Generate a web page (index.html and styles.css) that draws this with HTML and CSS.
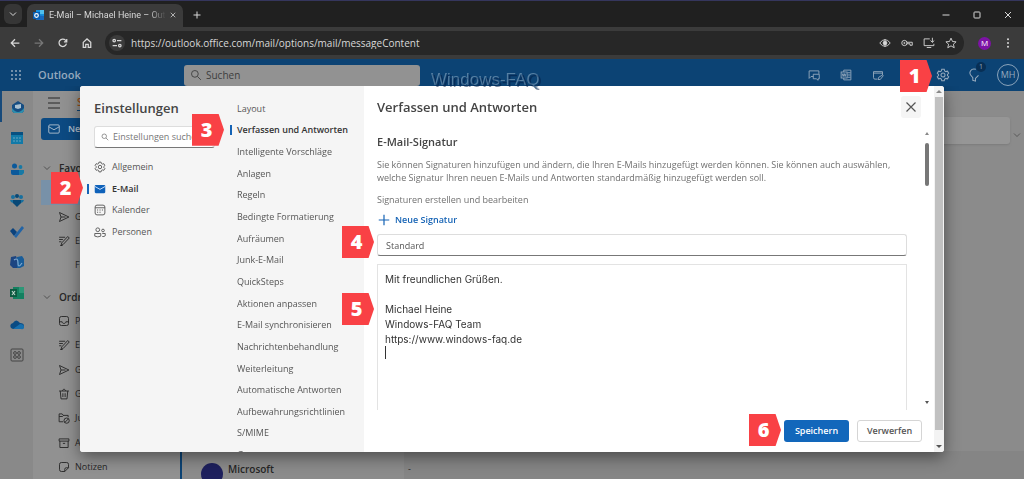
FILE: index.html
```html
<!DOCTYPE html>
<html lang="de">
<head>
<meta charset="utf-8">
<title>E-Mail – Michael Heine – Outlook</title>
<link rel="stylesheet" href="styles.css">
</head>
<body>
<svg class="sprite" aria-hidden="true">
  <symbol id="gear" viewBox="0 0 16 16"><path d="M6.6 1.5h2.8l.5 1.9 1.3.7 1.9-.5 1.4 2.4L13.100 7.400v1.200l1.400 1.400-1.400 2.400-1.900-.5-1.300.7-.5 1.900H6.600l-.5-1.900-1.300-.7-1.900.5-1.400-2.400 1.400-1.400V7.400L1.500 6l1.400-2.400 1.900.5 1.300-.7z"/><circle cx="8" cy="8" r="2.300"/></symbol>
  <symbol id="search" viewBox="0 0 16 16"><circle cx="6.500" cy="6.500" r="4.500"/><path d="M10 10l4.500 4.500"/></symbol>
  <symbol id="send" viewBox="0 0 16 16"><path d="M2 2l12.500 6L2 14l2-6zM4 8h6"/></symbol>
  <symbol id="draft" viewBox="0 0 16 16"><path d="M1.500 3h8M1.500 6h5M1.500 9h3M4 14l1-3.500 8-8.500 2 2-8 8.500zM3 14h3"/></symbol>
  <symbol id="inbox" viewBox="0 0 16 16"><rect x="2" y="2" width="12" height="12" rx="2.500"/><path d="M2 9h3.500c0 3 5 3 5 0H14"/></symbol>
  <symbol id="trash" viewBox="0 0 16 16"><path d="M1.500 4h13M6 4c0-3 4-3 4 0M3 4l1 10.500h8L13 4M6.500 7v5M9.500 7v5"/></symbol>
  <symbol id="junk" viewBox="0 0 16 16"><path d="M7 13H1.500V2.500h4L7 4.500h6.500V7M1.500 6H6l1.500-1.500"/><circle cx="11.500" cy="11.500" r="3.500"/><path d="M9 14l5-5"/></symbol>
  <symbol id="archive" viewBox="0 0 16 16"><path d="M1.500 2.500h13v3h-13zM2.500 5.500v8.500h11V5.500M6.500 8.500h3"/></symbol>
  <symbol id="note" viewBox="0 0 16 16"><path d="M9 14H4.500Q2 14 2 11.500v-7Q2 2 4.500 2h7Q14 2 14 4.500V9l-5 5v-3q0-2 2-2h3"/></symbol>
  <symbol id="people" viewBox="0 0 16 16"><circle cx="5" cy="5" r="2.500"/><circle cx="12" cy="6" r="1.800"/><path d="M1 13.500V10h8v3.500q-4 2-8 0M11 10h4v3q-1.500 1.500-4 1"/></symbol>
  <symbol id="calendar" viewBox="0 0 16 16"><rect x="1.500" y="1.500" width="13" height="13" rx="2.500"/><path d="M1.500 5h13M4 8h1.500M7.300 8h1.500M10.500 8H12M4 11h1.500M7.300 11h1.500"/></symbol>
  <symbol id="envelope" viewBox="0 0 16 16"><rect x="1" y="2.500" width="14" height="11" rx="1.500"/><path d="M1 5l7 4 7-4"/></symbol>
  <symbol id="chevron" viewBox="0 0 16 16"><path d="M2 5l6 6 6-6"/></symbol>
  <symbol id="cross" viewBox="0 0 16 16"><path d="M2 2l12 12M14 2L2 14"/></symbol>
  <symbol id="plus" viewBox="0 0 16 16"><path d="M8 1v14M1 8h14"/></symbol>
</svg>

<div class="browser">
  <header class="tabstrip">
    <button class="tab-search" aria-label="Tabs durchsuchen"><svg class="i8"><use href="#chevron"/></svg></button>
    <div class="tab">
      <svg class="favicon" viewBox="0 0 12 12"><path fill="#1490df" d="M3 1h8v6H3z"/><path fill="#50c0ee" d="M7 1h4v4H7z"/><path fill="#1768bd" d="M2 6l9 1v4H3z"/><rect x="0" y="3" width="7" height="7" fill="#075cae"/><circle cx="3.500" cy="6.500" r="1.800" stroke="#fff" stroke-width="1.200" fill="none"/></svg>
      <span class="tab-title">E-Mail – Michael Heine – Outlook</span>
      <button class="plain" aria-label="Tab schließen"><svg class="i6"><use href="#cross"/></svg></button>
    </div>
    <button class="plain newtab" aria-label="Neuer Tab"><svg class="i8"><use href="#plus"/></svg></button>
    <div class="window-controls">
      <button class="plain" aria-label="Minimieren"><svg class="i8" viewBox="0 0 16 16"><path d="M1 8h14"/></svg></button>
      <button class="plain" aria-label="Maximieren"><svg class="i8" viewBox="0 0 16 16"><rect x="2" y="2" width="12" height="12" rx="1.500"/></svg></button>
      <button class="plain" aria-label="Schließen"><svg class="i8"><use href="#cross"/></svg></button>
    </div>
  </header>

  <div class="toolbar">
    <nav class="nav-buttons" aria-label="Navigation">
      <button class="plain" aria-label="Zurück"><svg class="i10" viewBox="0 0 16 16"><path d="M15 8H2M8 2L2 8l6 6"/></svg></button>
      <button class="plain dim" aria-label="Vorwärts"><svg class="i10" viewBox="0 0 16 16"><path d="M1 8h13M8 2l6 6-6 6"/></svg></button>
      <button class="plain" aria-label="Neu laden"><svg class="i10" viewBox="0 0 16 16"><path d="M13.500 9A6 6 0 1 1 12 3.500L14 6M14 1.500V6H9.500"/></svg></button>
      <button class="plain" aria-label="Startseite"><svg class="i10" viewBox="0 0 16 16"><path d="M2 7l6-5.500L14 7v8h-4v-5H6v5H2z"/></svg></button>
    </nav>
    <div class="address">
      <button class="plain site-info" aria-label="Websiteinformationen"><svg class="i10" viewBox="0 0 16 16"><circle cx="3.500" cy="4" r="2"/><path d="M8 4h7M1 12h7"/><circle cx="12.500" cy="12" r="2"/></svg></button>
      <input class="url" aria-label="Adresse" value="https://outlook.office.com/mail/options/mail/messageContent">
      <button class="plain" aria-label="Ansicht"><svg class="i12" viewBox="0 0 16 16"><path d="M1 8q7-9 14 0-7 9-14 0z"/><circle cx="8" cy="8" r="2.500" fill="currentColor"/><path d="M8 3v10"/></svg></button>
      <button class="plain" aria-label="Passwörter"><svg class="i12" viewBox="0 0 16 16"><circle cx="4.500" cy="8" r="3.500"/><circle cx="4.500" cy="8" r=".8"/><path d="M8 7h7v4h-3V9H8"/></svg></button>
      <button class="plain" aria-label="App installieren"><svg class="i12" viewBox="0 0 16 16"><path d="M9 2.500H1.500v9h13V9M5 14h6M12.500 1v6M10 4.800L12.500 7 15 4.800"/></svg></button>
      <button class="plain" aria-label="Lesezeichen"><svg class="i12" viewBox="0 0 16 16"><path d="M8 1.500l2 4.500 4.800.4-3.600 3.200 1.100 4.700L8 11.800l-4.300 2.500 1.100-4.700L1.200 6.400 6 6z"/></svg></button>
    </div>
    <button class="profile" aria-label="Profil">M</button>
    <button class="plain" aria-label="Menü"><svg class="i10" viewBox="0 0 16 16"><g fill="currentColor" stroke="none"><circle cx="8" cy="2" r="1.600"/><circle cx="8" cy="8" r="1.600"/><circle cx="8" cy="14" r="1.600"/></g></svg></button>
  </div>
</div>

<div class="suitebar">
  <button class="plain waffle" aria-label="Apps"><svg class="i12" viewBox="0 0 12 12"><g fill="currentColor" stroke="none"><circle cx="2" cy="2" r="1"/><circle cx="6" cy="2" r="1"/><circle cx="10" cy="2" r="1"/><circle cx="2" cy="6" r="1"/><circle cx="6" cy="6" r="1"/><circle cx="10" cy="6" r="1"/><circle cx="2" cy="10" r="1"/><circle cx="6" cy="10" r="1"/><circle cx="10" cy="10" r="1"/></g></svg></button>
  <span class="brand">Outlook</span>
  <label class="suite-search"><svg class="i12"><use href="#search"/></svg><input aria-label="Suchen" placeholder="Suchen"></label>
  <div class="suite-actions">
    <button class="plain" aria-label="Chat"><svg class="i12" viewBox="0 0 16 16"><path d="M7 10H4l-2.500 2.500V2.500h13v4M7 7h8v6h-1.500v2l-2.500-2H7z"/></svg></button>
    <button class="plain" aria-label="Word"><svg class="i12" viewBox="0 0 16 16"><path d="M5 4V1.500h9.500v13H5V12M10 5h4M10 8h4M10 11h4"/><rect x="1.500" y="4" width="8" height="8"/><path d="M3 6l1.200 4L5.500 6l1.300 4L8 6"/></svg></button>
    <button class="plain" aria-label="Notizen"><svg class="i12" viewBox="0 0 16 16"><path d="M7 13.500H4Q2 13.500 2 11.500v-8h12V8M2 5.500h12M8 14l1-3 5-3 1 1-4 5z"/></svg></button>
    <span class="spacer"></span>
    <button class="plain settings" aria-label="Einstellungen"><svg class="i14"><use href="#gear"/></svg><span class="step step-1">1</span></button>
    <button class="plain tips" aria-label="Tipps"><svg class="i14" viewBox="0 0 16 16"><path d="M9 1.500C3 0 1 5 3 8l2.500 3v3l3 1v-3L12 8.500"/></svg><span class="count">1</span></button>
    <button class="account" aria-label="Konto">MH</button>
  </div>
</div>

<main class="mail">
  <nav class="rail" aria-label="Apps">
    <a href="#" class="current" aria-label="E-Mail"><svg viewBox="0 0 14 14"><path fill="#164d82" d="M1 5l6-4 6 4v6l-2 2H3l-2-2z"/><path fill="#2d8eae" d="M1 8q6 8 12 0v3l-2 2H3l-2-2z"/><path fill="#aac0d0" d="M4 5l6-1v4L7 9 4 8z"/></svg></a>
    <a href="#" aria-label="Kalender"><svg viewBox="0 0 14 14"><path fill="#075081" d="M1 1h12v4H1z"/><path fill="#127aa8" d="M1 4h12v9H1z"/><path stroke="#69a4c0" stroke-width="1.200" stroke-dasharray="2 1" d="M3 7h8M3 10h8"/></svg></a>
    <a href="#" aria-label="Personen"><svg viewBox="0 0 14 14"><g fill="#0b599b"><circle cx="4.500" cy="4" r="2.500"/><path d="M1 8h8v5H3q-2 0-2-2z"/></g><g fill="#1779a5"><circle cx="10.500" cy="5" r="1.900"/><path d="M9 8h5v3l-2 2H9z"/></g></svg></a>
    <a href="#" aria-label="Gruppen"><svg viewBox="0 0 14 14"><g fill="#17709f"><circle cx="3" cy="4" r="2"/><circle cx="11" cy="4" r="2"/><path d="M0 7h5v4L1 9zM9 7h5l-1 2-4 2z"/></g><g fill="#084876"><circle cx="7" cy="3" r="2"/><path d="M3 7h8v3l-4 4-4-4z"/></g></svg></a>
    <a href="#" aria-label="To Do"><svg viewBox="0 0 14 14"><path fill="#0b427d" d="M0 7l3-3 4 4-3 4z"/><path fill="#2264a6" d="M4 12l8-10 2 2-8 10z"/></svg></a>
    <a href="#" aria-label="Word"><svg viewBox="0 0 14 14"><path fill="#1d4581" d="M1 2l5-1 2 5v7H3L0 10z"/><path fill="#195d99" d="M7 2l5-1 2 3v7l-4 2H7z"/><path stroke="#80a9d0" fill="none" d="M4 5q4-3 4 3t4 0"/></svg></a>
    <a href="#" aria-label="Excel"><svg viewBox="0 0 14 14"><path fill="#138060" d="M3 1h11v12H3z"/><path fill="#2d9777" d="M9 1h5v6H9z"/><path fill="#0d5940" d="M0 3h7v8H0z"/><path stroke="#b8d3c8" fill="none" d="M2 5l3 4M5 5L2 9"/></svg></a>
    <a href="#" aria-label="OneDrive"><svg viewBox="0 0 14 14"><path fill="#0a4b83" d="M1 11q-2-4 2-5 3-5 7 0 4 0 4 3t-3 3H3z"/><path fill="#166fae" d="M3 12l7-5q4 0 4 3t-3 2z"/></svg></a>
    <a href="#" aria-label="Weitere Apps"><svg class="outlined" viewBox="0 0 14 14"><rect x="1" y="1" width="12" height="12" rx="1"/><circle cx="5" cy="5" r="1.400"/><circle cx="9" cy="5" r="1.400"/><circle cx="5" cy="9" r="1.400"/><circle cx="9" cy="9" r="1.400"/></svg></a>
  </nav>

  <section class="folders">
    <div class="ribbon-tabs"><svg class="i12" viewBox="0 0 12 12"><path d="M0 1h12M0 6h12M0 11h12"/></svg><span class="ribbon-tab">Start</span></div>
    <button class="compose"><svg class="i12"><use href="#envelope"/></svg>Neue E-Mail</button>
    <ul class="folder-list">
      <li class="group"><svg class="i8"><use href="#chevron"/></svg>Favoriten</li>
      <li class="selected"></li>
      <li><svg class="i12"><use href="#send"/></svg>Gesendete</li>
      <li><svg class="i12"><use href="#draft"/></svg>Entwürfe</li>
      <li class="add">Favorit</li>
      <li class="group second"><svg class="i8"><use href="#chevron"/></svg>Ordner</li>
      <li><svg class="i12"><use href="#inbox"/></svg>Posteingang</li>
      <li><svg class="i12"><use href="#draft"/></svg>Entwürfe</li>
      <li><svg class="i12"><use href="#send"/></svg>Gesendete</li>
      <li><svg class="i12"><use href="#trash"/></svg>Gelöschte</li>
      <li><svg class="i12"><use href="#junk"/></svg>Junk-E-Mail</li>
      <li><svg class="i12"><use href="#archive"/></svg>Archiv</li>
      <li><svg class="i12"><use href="#note"/></svg>Notizen</li>
    </ul>
  </section>

  <section class="messages">
    <div class="ribbon"><div class="ribbon-box"></div><svg class="i8"><use href="#chevron"/></svg></div>
    <div class="message-row">
      <div class="message"><span class="avatar"></span><strong>Microsoft</strong></div>
      <div class="reading"><span>-</span></div>
    </div>
  </section>
</main>

<div class="dialog" role="dialog" aria-label="Einstellungen">
  <aside class="categories">
    <h2>Einstellungen</h2>
    <label class="settings-search"><svg class="i8"><use href="#search"/></svg><input aria-label="Einstellungen suchen" placeholder="Einstellungen suchen"></label>
    <nav class="category-list" aria-label="Kategorien">
      <a href="#"><svg class="i12"><use href="#gear"/></svg>Allgemein</a>
      <a href="#" class="active"><svg class="i12" viewBox="0 0 16 16"><rect x="1" y="2.500" width="14" height="11" rx="1.500" fill="#0f62ba" stroke="none"/><path d="M1 4.500l7 4 7-4" stroke="#dceaff"/></svg>E-Mail<span class="step step-2">2</span></a>
      <a href="#"><svg class="i12"><use href="#calendar"/></svg>Kalender</a>
      <a href="#"><svg class="i12"><use href="#people"/></svg>Personen</a>
    </nav>
  </aside>
  <nav class="sections" aria-label="E-Mail-Einstellungen">
    <a href="#">Layout</a>
    <a href="#" class="active">Verfassen und Antworten<span class="step step-3">3</span></a>
    <a href="#">Intelligente Vorschläge</a>
    <a href="#">Anlagen</a>
    <a href="#">Regeln</a>
    <a href="#">Bedingte Formatierung</a>
    <a href="#">Aufräumen</a>
    <a href="#">Junk-E-Mail</a>
    <a href="#">QuickSteps</a>
    <a href="#">Aktionen anpassen</a>
    <a href="#">E-Mail synchronisieren</a>
    <a href="#">Nachrichtenbehandlung</a>
    <a href="#">Weiterleitung</a>
    <a href="#">Automatische Antworten</a>
    <a href="#">Aufbewahrungsrichtlinien</a>
    <a href="#">S/MIME</a>
    <a href="#">Gruppen</a>
  </nav>
  <section class="panel">
    <header class="panel-head"><h2>Verfassen und Antworten</h2><button class="close" aria-label="Schließen"><svg class="i12"><use href="#cross"/></svg></button></header>
    <div class="panel-scroll">
      <div class="panel-body">
        <h3>E-Mail-Signatur</h3>
        <p>Sie können Signaturen hinzufügen und ändern, die Ihren E-Mails hinzugefügt werden können. Sie können auch auswählen,<br>welche Signatur Ihren neuen E-Mails und Antworten standardmäßig hinzugefügt werden soll.</p>
        <p class="caption">Signaturen erstellen und bearbeiten</p>
        <button class="new-signature"><svg class="i12"><use href="#plus"/></svg>Neue Signatur</button>
        <div class="field"><input aria-label="Signaturname" value="Standard"><span class="step step-field">4</span></div>
        <div class="editor"><textarea aria-label="Signatur">Mit freundlichen Grüßen.

Michael Heine
Windows-FAQ Team
https://www.windows-faq.de
</textarea><span class="caret"></span><span class="step step-editor">5</span></div>
      </div>
      <div class="thin-scroll"><span class="arrow up"></span><span class="thin-thumb"></span><span class="arrow down"></span></div>
    </div>
    <footer class="panel-foot">
      <button class="primary">Speichern<span class="step step-6">6</span></button>
      <button class="secondary">Verwerfen</button>
    </footer>
  </section>
  <div class="wide-scroll"><span class="arrow up"></span><span class="wide-thumb"></span><span class="arrow down"></span></div>
</div>
<div class="watermark">Windows-FAQ</div>
</body>
</html>
```

FILE: styles.css
```css
* { box-sizing: border-box; }
body {
  margin: 0;
  height: 100vh;
  display: flex;
  flex-direction: column;
  overflow: hidden;
  background: #8f8f8f;
  color: #555;
  font: 9px/12px "Open Sans", "Noto Sans", sans-serif;
}
button, input, textarea { font: inherit; color: inherit; }
button { padding: 0; border: 0; }
input, textarea { min-width: 0; padding: 0; border: 0; background: none; outline: 0; }
a { color: inherit; text-decoration: none; }
h2, h3, p, ul { margin: 0; padding: 0; }
svg { flex: none; fill: none; stroke: currentColor; stroke-width: 1.2; }
.sprite { display: none; }
.i6 { width: 6px; height: 6px; stroke-width: 2; }
.i8 { width: 8px; height: 8px; stroke-width: 2; }
.i10 { width: 10px; height: 10px; stroke-width: 2; }
.i12 { width: 12px; height: 12px; }
.i14 { width: 14px; height: 14px; }
.plain { display: flex; align-items: center; justify-content: center; background: none; }

/* Browser frame */
.browser { background: #3b3b3b; color: #d8d8d8; border-top: 1px solid #35365d; }
.tabstrip { display: flex; align-items: flex-end; height: 26px; padding-left: 4px; background: #202020; }
.tab-search { display: flex; align-items: center; justify-content: center; width: 18px; height: 20px; margin-bottom: 3px; border-radius: 6px; background: #363636; }
.tab { display: flex; align-items: center; gap: 4px; width: 156px; height: 23px; margin-left: 5px; padding: 0 7px 2px 6px; border-radius: 7px 7px 0 0; background: #3b3b3b; }
.favicon { width: 12px; height: 12px; stroke: none; }
.tab-title { flex: 1; overflow: hidden; font-family: Roboto, "Open Sans", sans-serif; white-space: nowrap; mask-image: linear-gradient(90deg, #000 85%, transparent); }
.newtab { height: 25px; margin-left: 10px; }
.window-controls { display: flex; gap: 23px; height: 25px; margin-left: auto; padding-right: 12px; }
.toolbar { display: flex; align-items: center; height: 32px; padding: 0 11px 0 10px; }
.nav-buttons { display: flex; gap: 14px; }
.dim { color: #777; }
.address { flex: 1; display: flex; align-items: center; gap: 10px; height: 24px; margin: 0 14px 0 13px; padding: 0 7px 0 4px; border-radius: 12px; background: #272727; }
.site-info { width: 16px; height: 16px; border-radius: 8px; background: #3b3b3b; }
.url { flex: 1; margin-left: -4px; font: 10px/12px "Noto Sans", "Open Sans", sans-serif; font-family: Lato, "Open Sans", sans-serif; }
.address .url { font-family: "Open Sans", sans-serif; }
.profile { width: 13px; height: 13px; margin-right: 12px; border-radius: 50%; background: #7d13a5; color: #fff; font-size: 8px; line-height: 12px; }

/* Suite header */
.suitebar { position: relative; z-index: 4; display: flex; align-items: center; flex: none; height: 27px; margin-bottom: 5px; padding: 5px 5px 0 10px; background: #0c4374; color: #95a9bd; }
.brand { flex: none; width: 146px; margin-left: 16px; font-size: 11px; font-weight: 600; }
.suite-search { display: flex; align-items: center; gap: 4px; width: 23%; min-width: 236px; height: 21px; padding-left: 6px; border-radius: 3px; background: #929292; color: #3e3e3e; font-size: 10px; }
.suite-search input { flex: 1; }
.suite-search input::placeholder { color: #3e3e3e; opacity: 1; }
.suite-actions { display: flex; align-items: center; gap: 20px; margin-left: auto; }
.spacer { width: 12px; }
.settings, .tips { position: relative; }
.tips { margin-left: -2px; }
.account { width: 22px; height: 22px; margin-left: -5px; border: 1px solid #8aa3ba; border-radius: 50%; background: none; font-size: 9px; line-height: 20px; }
.count { position: absolute; top: -6px; right: -4px; width: 10px; height: 10px; border-radius: 5px; background: #082f55; font-size: 7px; line-height: 10px; }

/* Mail page behind the dialog */
.mail { flex: 1; display: flex; min-height: 0; color: #262626; box-shadow: 0 -5px #0c4374; }
.rail { display: flex; flex-direction: column; width: 33px; background: #898989; }
.rail a { display: flex; align-items: center; justify-content: center; height: 31px; }
.rail a.current { border-left: 2px solid #174a7b; }
.rail svg { width: 14px; height: 14px; stroke: none; }
.rail .outlined { stroke: #444; stroke-width: 1; }
.folders { display: flex; flex-direction: column; width: 147px; padding-left: 8px; background: #919191; }
.ribbon-tabs { display: flex; align-items: center; gap: 17px; height: 27px; padding: 0 0 3px 7px; }
.ribbon-tabs svg { stroke-width: 1; }
.ribbon-tab { padding-bottom: 2px; border-bottom: 1px solid #0c4374; color: #9a4a12; font-size: 10px; font-weight: 600; }
.compose { display: flex; align-items: center; gap: 8px; flex: none; height: 22px; margin-bottom: 16px; padding-left: 7px; border-radius: 3px; background: #0c4a82; color: #b0bfce; font-weight: 600; white-space: nowrap; }
.folder-list { flex: 1; display: flex; flex-direction: column; list-style: none; }
.folder-list li { flex: 1; display: flex; align-items: center; gap: 5px; padding-left: 17px; white-space: nowrap; }
.folder-list .group { gap: 8px; padding-left: 2px; font-size: 10px; font-weight: 600; }
.folder-list .group svg { stroke-width: 1.2; }
.folder-list .selected { background: #7891a8; }
.folder-list .add { padding-left: 34px; }
.folder-list .second { margin-top: 7px; }
.messages { flex: 1; display: flex; flex-direction: column; justify-content: space-between; background: #8b8b8b; }
.ribbon { display: flex; align-items: center; gap: 3px; height: 54px; padding: 26px 3px 2px 8px; }
.ribbon-box { flex: 1; height: 27px; border-radius: 3px; background: #969696; box-shadow: 0 1px 2px #7c7c7c; }
.ribbon svg { align-self: flex-end; margin-bottom: 4px; stroke-width: 1; }
.message-row { display: flex; height: 28px; border-left: 2px solid #0c4374; background: #858585; }
.message { display: flex; gap: 5px; width: 222px; padding: 12px 0 0 19px; background: #8b8b8b; }
.avatar { flex: none; width: 22px; height: 22px; border-radius: 50%; background: #1e205d; }
.message strong { font-size: 10px; font-weight: 600; }
.reading { padding: 12px 0 0 4px; }

/* Settings dialog */
.dialog { position: fixed; z-index: 3; inset: 86px 80px 27px 80px; display: flex; border-radius: 3px; background: #fff; box-shadow: 0 5px 16px rgba(0, 0, 0, .45); }
.dialog h2 { color: #444; font-size: 13px; line-height: 20px; font-weight: 600; }
.categories { width: 145px; padding: 12px 10px 0 14px; border-radius: 3px 0 0 3px; background: #f5f5f5; }
.settings-search { display: flex; align-items: center; gap: 4px; height: 22px; margin: 8px 0 8px; padding-left: 6px; border: 1px solid #ddd; border-bottom-color: #777; border-radius: 3px; background: #fff; }
.settings-search svg { stroke-width: 1.2; }
.settings-search input { flex: 1; }
.settings-search input::placeholder { color: #777; opacity: 1; }
.category-list { display: flex; flex-direction: column; height: 87px; }
.category-list a { position: relative; flex: 1; display: flex; align-items: center; gap: 6px; }
.active { color: #333; font-weight: 600; }
.active::before { content: ""; position: absolute; left: -7px; top: 50%; width: 2px; height: 10px; margin-top: -5px; background: #1563b5; }
.sections { display: flex; flex-direction: column; width: 139px; padding: 12px 0 0 12px; background: #f5f5f5; clip-path: inset(0 0 0 -50px); }
.sections a { position: relative; flex: 1; display: flex; align-items: center; }
.sections::after { content: ""; margin-bottom: -14px; }
.panel { flex: 1; display: flex; flex-direction: column; min-width: 0; }
.panel-head { display: flex; align-items: center; justify-content: space-between; height: 42px; padding: 0 13px; }
.close { display: flex; align-items: center; justify-content: center; width: 20px; height: 22px; border-radius: 3px; background: #f5f5f5; }
.close svg { stroke-width: 1.6; }
.panel-scroll { flex: 1; display: flex; min-height: 0; }
.panel-body { flex: 1; display: flex; flex-direction: column; min-width: 0; padding-left: 13px; }
.panel h3 { margin: 5px 0 7px; color: #444; font-size: 11px; line-height: 18px; font-weight: 600; }
.panel p { color: #707070; line-height: 13px; white-space: nowrap; }
.panel .caption { margin: 9px 0 7px; }
.new-signature { display: flex; align-items: center; align-self: flex-start; gap: 5px; height: 14px; padding-left: 1px; background: none; color: #1563b5; font-weight: 600; }
.new-signature svg { stroke-width: 1.6; }
.field { position: relative; height: 22px; margin: 7px 0 8px; }
.field input { width: 100%; height: 100%; padding-left: 8px; border: 1px solid #ddd; border-bottom-color: #777; border-radius: 3px; }
.editor { position: relative; flex: 1; min-height: 0; }
.editor textarea { display: block; width: 100%; height: 100%; padding: 7px; border: 1px solid #e3e3e3; border-bottom: 0; resize: none; overflow: hidden; color: #333; font: 10px/15px Inter, "Open Sans", sans-serif; }
.caret { position: absolute; left: 8px; top: 82px; width: 1px; height: 13px; background: #333; }
.thin-scroll { display: flex; flex-direction: column; align-items: center; width: 27px; padding: 4px 0 6px 12px; }
.thin-thumb { width: 4px; height: 43px; margin: 8px 0 auto; border-radius: 2px; background: #777; }
.arrow { flex: none; border: 3px solid transparent; }
.up { border-top: 0; border-bottom-color: #888; }
.down { border-bottom: 0; border-top-color: #555; }
.thin-scroll .arrow { border-left-width: 2px; border-right-width: 2px; }
.panel-foot { display: flex; align-items: center; justify-content: flex-end; gap: 8px; height: 42px; padding-right: 12px; }
.panel-foot button { position: relative; width: 65px; height: 22px; border-radius: 3px; font-weight: 600; }
.panel-foot .primary { background: #1267bb; color: #fff; }
.panel-foot .secondary { border: 1px solid #d5d5d5; background: #fff; }
.wide-scroll { display: flex; flex-direction: column; align-items: center; gap: 4px; width: 10px; padding: 4px 0; background: #f3f3f3; border-radius: 0 3px 3px 0; }
.wide-thumb { width: 8px; flex: 1; margin-bottom: 11px; background: #c1c1c1; }

/* Numbered step markers */
.step { position: absolute; z-index: 2; width: 32px; height: 32px; padding-right: 3px; background: #f94145; clip-path: polygon(0 0, 83% 0, 100% 50%, 83% 100%, 0 100%); color: #fff; font: 800 20px/32px "Open Sans", sans-serif; text-align: center; }
.step-1 { right: 18px; top: -8px; }
.step-2 { left: -43px; top: -6px; }
.step-3 { left: -45px; top: -6px; }
.step-field, .step-editor { left: -35px; }
.step-field { top: -8px; }
.step-editor { top: 29px; }
.step-6 { left: -35px; top: -6px; }
.watermark { position: fixed; z-index: 4; left: 432px; top: 70px; color: rgba(5, 45, 90, .35); font: 17px/22px "Liberation Sans", sans-serif; text-shadow: -1px -1px 0 rgba(120, 155, 185, .7), 1px 1px 0 rgba(0, 25, 65, .5); }
```
